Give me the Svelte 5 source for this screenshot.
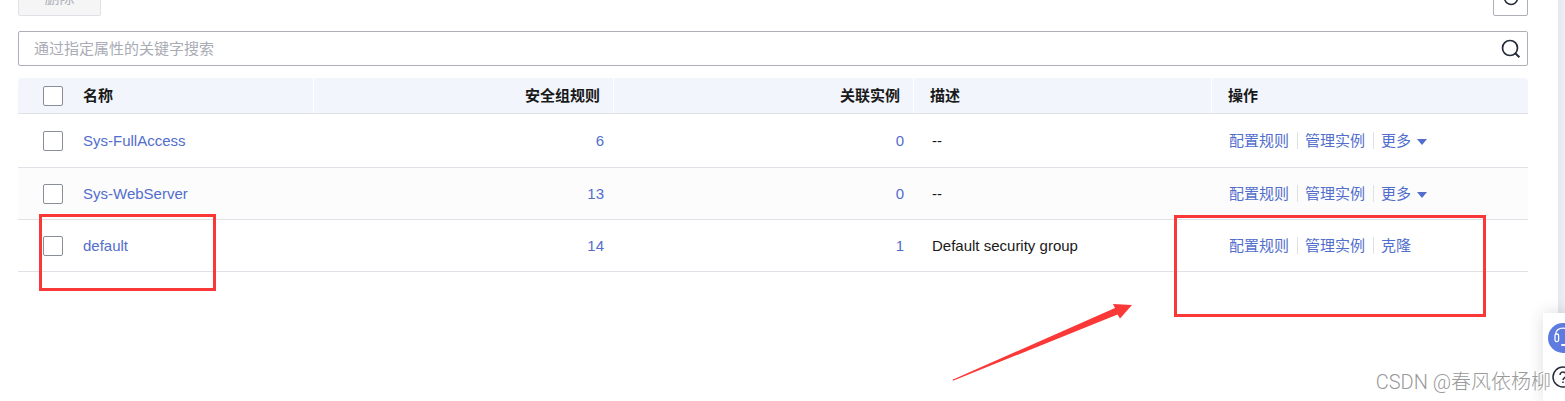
<script>
  const groups = [
    { name: 'Sys-FullAccess', rules: 6, instances: 0, description: '--', builtin: true },
    { name: 'Sys-WebServer', rules: 13, instances: 0, description: '--', builtin: true },
    { name: 'default', rules: 14, instances: 1, description: 'Default security group', builtin: false }
  ];

  let selected = $state([]);
  let keyword = $state('');

  const allSelected = $derived(selected.length === groups.length);

  function toggleAll() {
    selected = allSelected ? [] : groups.map((g) => g.name);
  }
</script>

<div class="page">
  <main>
    <div class="toolbar">
      <button class="delete" type="button" disabled>删除</button>
      <button class="refresh" type="button" aria-label="刷新">
        <svg viewBox="0 0 20 20" width="20" height="20" fill="none" stroke="#252b3a" stroke-width="1.6">
          <path d="M15.5 6.5A6.5 6.5 0 1 0 16.5 10M16 3v4h-4" />
        </svg>
      </button>
    </div>

    <div class="search">
      <input type="text" aria-label="搜索" placeholder="通过指定属性的关键字搜索" bind:value={keyword} />
      <button type="button" aria-label="搜索">
        <svg viewBox="0 0 20 20" width="20" height="20" fill="none" stroke="#252b3a">
          <circle cx="9" cy="9" r="7.5" stroke-width="1.7" />
          <path d="M14 14l4.4 4.2" stroke-width="2" />
        </svg>
      </button>
    </div>

    <table>
      <colgroup>
        <col class="c-check" />
        <col class="c-name" />
        <col class="c-count" />
        <col class="c-count" />
        <col class="c-desc" />
        <col />
      </colgroup>
      <thead>
        <tr>
          <th class="check"><input type="checkbox" aria-label="全选" checked={allSelected} onchange={toggleAll} /></th>
          <th class="name split">名称</th>
          <th class="count split">安全组规则</th>
          <th class="count split">关联实例</th>
          <th class="split">描述</th>
          <th>操作</th>
        </tr>
      </thead>
      <tbody>
        {#each groups as group (group.name)}
          <tr>
            <td class="check"><input type="checkbox" aria-label={group.name} value={group.name} bind:group={selected} /></td>
            <td class="name"><a href="#detail">{group.name}</a></td>
            <td class="count"><a href="#rules">{group.rules}</a></td>
            <td class="count"><a href="#instances">{group.instances}</a></td>
            <td>{group.description}</td>
            <td class="operations">
              <div class="actions">
                <a href="#configure">配置规则</a>
                <a href="#manage">管理实例</a>
                {#if group.builtin}
                  <button type="button">更多<span class="caret"></span></button>
                {:else}
                  <a href="#clone">克隆</a>
                {/if}
              </div>
            </td>
          </tr>
        {/each}
      </tbody>
    </table>
  </main>

  <aside>
    <button type="button" aria-label="客服">
      <svg viewBox="0 0 30 30" width="30" height="30" fill="none" stroke="#fff" stroke-width="1.3">
        <circle cx="15" cy="15" r="15" fill="#5e7ce0" stroke="none" />
        <path d="M7.5 11.500C8 7 11 5.200 15 5.200s7 1.800 7.500 6.300" />
        <rect x="7" y="11" width="3.600" height="7.600" rx="1.500" />
        <rect x="19.400" y="11" width="3.600" height="7.600" rx="1.500" />
        <path d="M22 18.600c0 2-1.500 3.200-4 3.200" />
        <path d="M14 22h3" stroke-width="2" stroke-linecap="round" />
      </svg>
    </button>
    <button type="button" aria-label="帮助">
      <svg viewBox="0 0 30 30" width="30" height="30" fill="none" stroke="#252b3a" stroke-width="1.5">
        <circle cx="15" cy="15" r="10" />
        <path d="M12 13a3 3 0 1 1 4.600 2.600c-1 .7-1.600 1.200-1.600 2.400M15 19.500v1.600" />
      </svg>
    </button>
  </aside>

  <div class="mark mark-name"></div>
  <div class="mark mark-actions"></div>
  <svg class="arrow" viewBox="0 0 182 80" width="182" height="80" aria-hidden="true">
    <path d="M0.500 76.800L163 5L161 1L180 2L168 15.500L165.500 11.500L1 77.800Z" fill="#fb3838" />
  </svg>
  <div class="watermark">CSDN @春风依杨柳</div>
</div>

<style>
  :global(body) {
    margin: 0;
  }

  .page {
    position: relative;
    box-sizing: border-box;
    min-height: 100vh;
    overflow: hidden;
    padding-right: 7px;
    background: linear-gradient(to right, #e6e7ef, #eeeff6) right / 7px 100% no-repeat;
    color: #191919;
    font: 15px/20px 'Liberation Sans', 'Noto Sans CJK SC', sans-serif;
  }

  main {
    box-sizing: border-box;
    min-height: 100vh;
    padding: 0 30px 0 18px;
    background: #fff;
  }

  button,
  input {
    box-sizing: border-box;
    margin: 0;
    font: inherit;
  }

  button {
    padding: 0;
    border: 0;
    background: none;
    cursor: pointer;
  }

  svg {
    display: block;
  }

  .toolbar {
    display: flex;
    justify-content: space-between;
    align-items: flex-end;
    height: 16px;
    overflow: hidden;
  }

  .toolbar button {
    height: 36px;
    border: 1px solid #adb0b8;
    border-radius: 2px;
  }

  .toolbar .delete {
    width: 83px;
    border-color: #dfe1e6;
    background: #f5f5f5;
    color: #adb0b8;
  }

  .toolbar .refresh {
    display: flex;
    align-items: center;
    justify-content: center;
    width: 35px;
  }

  .search {
    display: flex;
    align-items: center;
    box-sizing: border-box;
    height: 35px;
    margin: 15px 0 12px;
    padding-right: 6px;
    border: 1px solid #adb0b8;
    border-radius: 2px;
  }

  .search input {
    flex: 1;
    height: 32px;
    padding: 0 15px;
    border: 0;
    outline: 0;
    background: none;
  }

  .search input::placeholder {
    color: #a9abb5;
    opacity: 1;
  }

  table {
    width: 100%;
    table-layout: fixed;
    border-collapse: separate;
    border-spacing: 0;
  }

  .c-check {
    width: 64px;
  }

  .c-name {
    width: 232px;
  }

  .c-count {
    width: 300px;
  }

  .c-desc {
    width: 298px;
  }

  th,
  td {
    box-sizing: border-box;
    padding: 0 18px;
    border-bottom: 1px solid #dfe1e6;
    text-align: left;
  }

  th {
    height: 36px;
    padding: 0 16px;
    background: #f2f5fc;
    font-weight: 700;
  }

  th:first-child {
    border-top-left-radius: 4px;
  }

  th:last-child {
    border-top-right-radius: 4px;
  }

  th.split {
    background: linear-gradient(#fff, #fff) right / 1px 100% no-repeat #f2f5fc;
  }

  td {
    height: 52px;
  }

  tbody tr:first-child td {
    height: 54px;
  }

  tbody tr:nth-child(even) {
    background: #fcfcfc;
  }

  .check {
    padding: 0 0 0 25px;
  }

  .name {
    padding-left: 1px;
  }

  .count {
    text-align: right;
  }

  th.count {
    padding-right: 14px;
  }

  td.count {
    padding-right: 10px;
  }

  .operations {
    padding-left: 17px;
  }

  input[type='checkbox'] {
    display: block;
    appearance: none;
    width: 20px;
    height: 20px;
    border: 1px solid #8a8e99;
    border-radius: 2px;
    background: #fff;
  }

  input[type='checkbox']:checked {
    background: #526ecc;
    box-shadow: inset 0 0 0 3px #fff;
  }

  a,
  .actions button {
    color: #526ecc;
    text-decoration: none;
  }

  .actions {
    display: flex;
    align-items: center;
  }

  .actions > * + * {
    margin-left: 8px;
    padding-left: 8px;
    background: linear-gradient(#dfe1e6, #dfe1e6) left / 1px 17px no-repeat;
  }

  .actions button {
    display: flex;
    align-items: center;
    gap: 6px;
  }

  .caret {
    margin-top: 2px;
    border: 5px solid transparent;
    border-top: 6px solid #526ecc;
    border-bottom: 0;
  }

  aside {
    position: absolute;
    top: 313px;
    right: -18px;
    bottom: 0;
    display: flex;
    flex-direction: column;
    gap: 9px;
    padding: 10px 5px;
    background: #fff;
    box-shadow: 0 0 16px rgba(37, 43, 58, 0.16);
  }

  .mark {
    position: absolute;
    box-sizing: border-box;
    border: 3px solid #fb3838;
    pointer-events: none;
  }

  .mark-name {
    top: 214px;
    left: 39px;
    width: 177px;
    height: 77px;
  }

  .mark-actions {
    top: 215px;
    left: 1174px;
    width: 312px;
    height: 102px;
  }

  .arrow {
    position: absolute;
    top: 303px;
    left: 952px;
  }

  .watermark {
    position: absolute;
    right: 14px;
    bottom: 4px;
    color: #999;
    font: 300 20px/30px Roboto, 'Noto Sans CJK SC', sans-serif;
    text-shadow: -1px -1px 0 #fff;
    white-space: nowrap;
  }
</style>
